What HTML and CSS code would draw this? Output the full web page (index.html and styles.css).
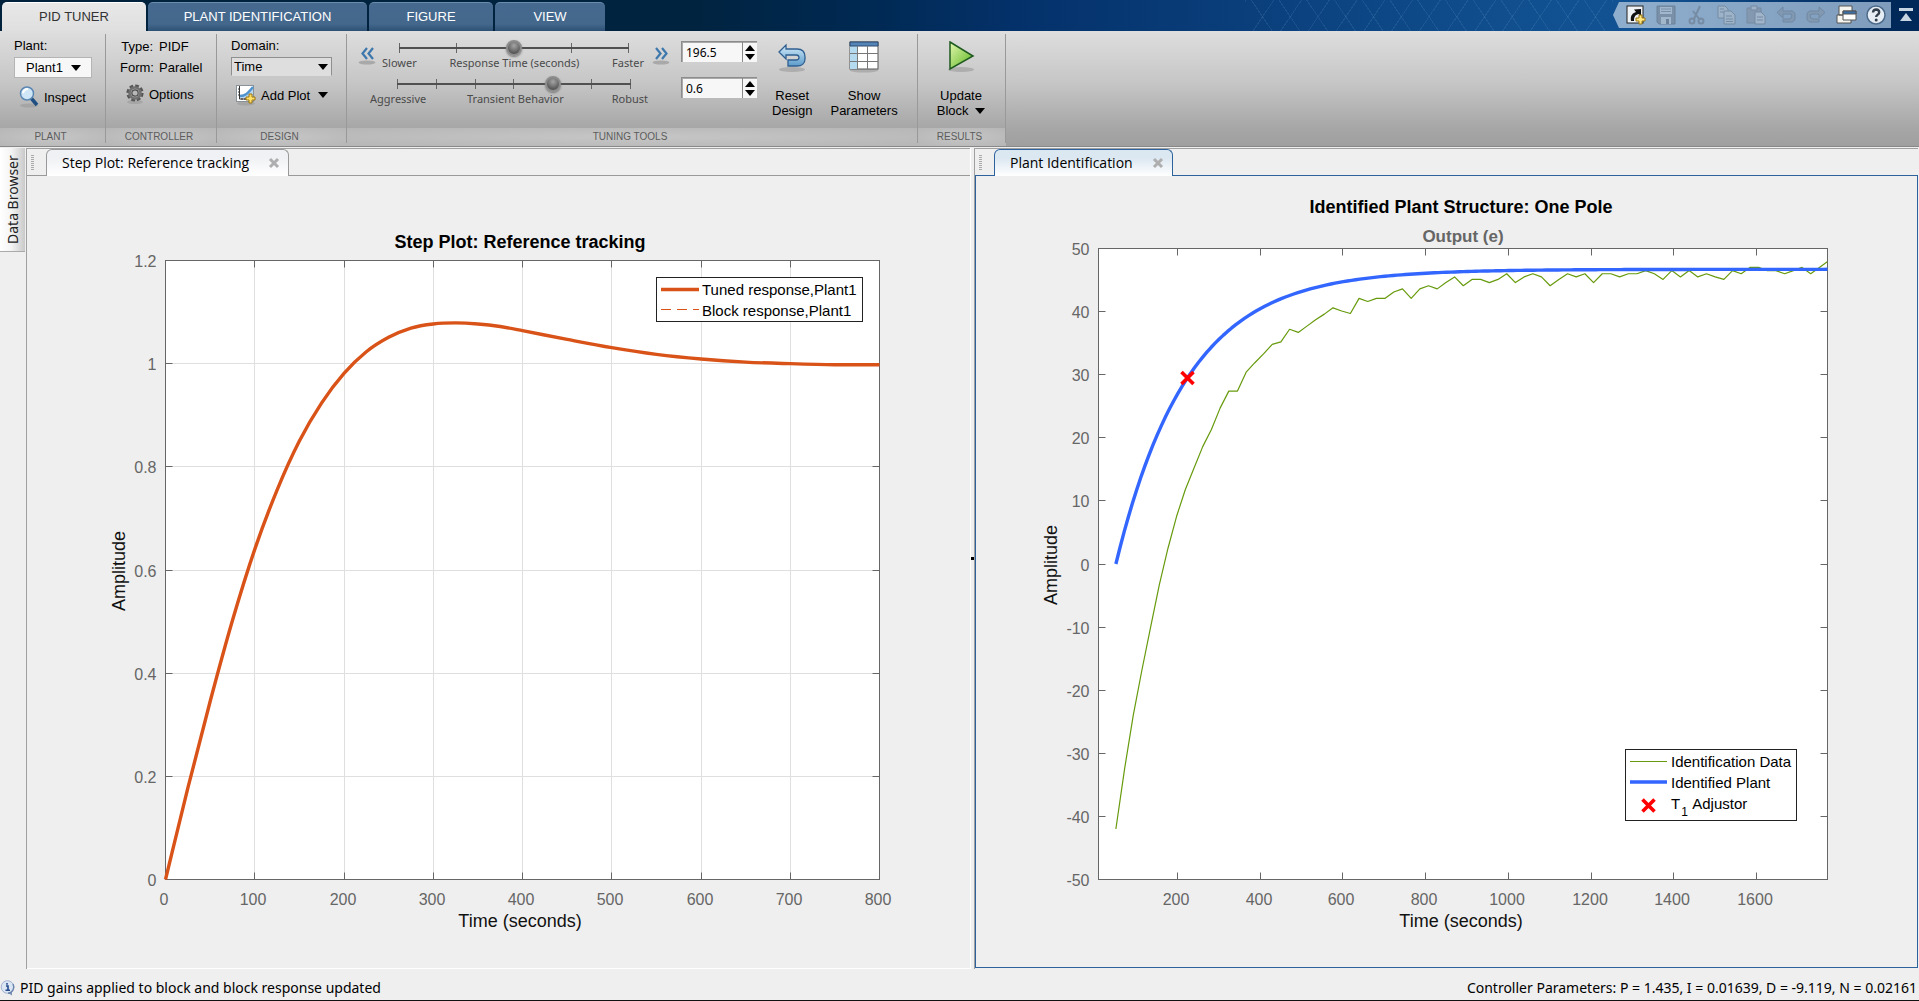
FILE: index.html
```html
<!DOCTYPE html>
<html lang="en">
<head>
<meta charset="utf-8">
<title>PID Tuner</title>
<link rel="stylesheet" href="styles.css">
</head>
<body>
<div class="app">
  <header class="titlebar">
    <nav class="tabs">
      <button class="tab tab-pid tab-active" type="button">PID TUNER</button>
      <button class="tab tab-ident" type="button">PLANT IDENTIFICATION</button>
      <button class="tab tab-figure" type="button">FIGURE</button>
      <button class="tab tab-view" type="button">VIEW</button>
    </nav>
    <div class="hatch"></div>
    <div class="quick">
      <button type="button" aria-label="New shortcut"><svg width="22" height="22" viewBox="0 0 22 22"><rect x="2" y="2" width="16" height="17" fill="#eef2f5" stroke="#222"/><path d="M6 17C5 11 8 9 11 8L9 5.500l7-.5v7l-2.500-2C10 11 9 13 9 17z" fill="#111"/><path d="M14 11h3v3h3v3h-3v3h-3v-3h-3v-3h3z" fill="#ffe680" stroke="#9a7410"/></svg></button>
      <button type="button" aria-label="Save" class="off"><svg width="22" height="22" viewBox="0 0 22 22"><path d="M2 2h18v18H4l-2-2z" fill="#74879c" stroke="#60748a"/><path d="M5 3h12v7H5zM6 13h10v7H6z" fill="#a9bbcd"/><path d="M6 5h10M6 7.500h10" stroke="#74879c"/><path d="M11 15h3v5h-3z" fill="#60748a"/></svg></button>
      <button type="button" aria-label="Cut" class="off"><svg width="22" height="22" viewBox="0 0 22 22" fill="none" stroke="#6f8398" stroke-width="2"><path d="M15 2L9 15M8 7l7 9"/><circle cx="7" cy="17" r="2.500"/><circle cx="16" cy="17" r="2.500"/></svg></button>
      <button type="button" aria-label="Copy" class="off"><svg width="22" height="22" viewBox="0 0 22 22" fill="#a5b7c9" stroke="#6f8398"><path d="M3 2h7l3 3v9H3z"/><path d="M9 7h7l4 4v9H9z"/><path d="M5 5h4M5 8h4M11 12h6M11 15h7M11 17.500h7"/></svg></button>
      <button type="button" aria-label="Paste" class="off"><svg width="22" height="22" viewBox="0 0 22 22" stroke="#6f8398"><path d="M2 4h14v15H2z" fill="#8396aa"/><path d="M6 2h6v4H6z" fill="#a5b7c9"/><path d="M10 8h6l4 4v8H10z" fill="#a9bbcd"/><path d="M12 13h6M12 16h6"/></svg></button>
      <button type="button" aria-label="Undo" class="off"><svg width="22" height="22" viewBox="0 0 22 22"><path d="M8 3v4h7a4 4 0 0 1 5 4v3a4 4 0 0 1-5 4H8v-3h6q3 0 3-4-.5-1-3-1H8v4L2 8.500z" fill="#7f95ad" stroke="#6a8098"/></svg></button>
      <button type="button" aria-label="Redo" class="off"><svg width="22" height="22" viewBox="0 0 22 22"><path d="M14 3v4H7a4 4 0 0 0-5 4v3a4 4 0 0 0 5 4h7v-3H8q-3 0-3-4 .5-1 3-1h6v4l6-5.500z" fill="#8297ad" stroke="#6a8098"/></svg></button>
      <button type="button" aria-label="Switch windows"><svg width="22" height="22" viewBox="0 0 22 22" fill="#f5f4ee" stroke="#555"><path d="M4 2h13v9H4zM2 11h14v8H2z"/><path d="M8 7h13v9H8z" fill="#fff"/><path d="M8 7h13v3H8z" fill="#3c6fa5"/></svg></button>
      <button type="button" aria-label="Help"><svg width="22" height="22" viewBox="0 0 22 22"><circle cx="11" cy="11" r="9" fill="#e6edf4" stroke="#4c6a8a" stroke-width="1.500"/><path d="M8 8.500q.3-3 3.200-3 3 .2 3 2.800 0 1.500-1.600 2.400-1.400.8-1.400 2.300" fill="none" stroke="#333f4d" stroke-width="2.400"/><circle cx="11.200" cy="16" r="1.500" fill="#333f4d"/></svg></button>
    </div>
    <button class="collapse" type="button" aria-label="Minimize toolstrip"><svg width="14" height="14" viewBox="0 0 14 14"><path d="M0 0h14v3H0zM7 5l6 8H1z" fill="#c8d6e4"/></svg></button>
  </header>

  <div class="toolstrip">
    <section class="group g-plant">
      <div class="group-body">
        <span class="caption">Plant:</span>
        <button class="drop" type="button">Plant1 <i class="caret"></i></button>
        <button class="tool inspect" type="button"><svg width="20" height="22" viewBox="0 0 20 22"><ellipse cx="10" cy="19.500" rx="9" ry="2" fill="#999" opacity=".6"/><path d="M12 12l6 7" stroke="#1f4f82" stroke-width="3.500"/><circle cx="8" cy="7.500" r="6.500" fill="#cfe6f7" stroke="#5b87b3" stroke-width="1.500"/><path d="M4 7q1-4 5-4" stroke="#fff" stroke-width="2" fill="none"/></svg>Inspect</button>
      </div>
      <h2>PLANT</h2>
    </section>
    <section class="group g-controller">
      <div class="group-body">
        <dl class="facts"><dt>Type:</dt><dd>PIDF</dd><dt>Form:</dt><dd>Parallel</dd></dl>
        <button class="tool options" type="button"><svg width="18" height="20" viewBox="0 0 18 20"><ellipse cx="9" cy="18" rx="8" ry="2" fill="#999" opacity=".6"/><circle cx="9" cy="9" r="7.300" fill="none" stroke="#555" stroke-width="2.600" stroke-dasharray="3.700 2.030"/><circle cx="9" cy="9" r="5.500" fill="#ccc" stroke="#707070" stroke-width="2.600"/><circle cx="9" cy="9" r="3.200" fill="#b8b8b8" stroke="#484848" stroke-width="1.200"/></svg>Options</button>
      </div>
      <h2>CONTROLLER</h2>
    </section>
    <section class="group g-design">
      <div class="group-body">
        <label class="caption" for="domain">Domain:</label>
        <div class="select-wrap"><select id="domain"><option>Time</option><option>Frequency</option></select><i class="caret"></i></div>
        <button class="tool addplot" type="button"><svg width="20" height="22" viewBox="0 0 20 22"><ellipse cx="10" cy="19.500" rx="9" ry="2" fill="#999" opacity=".6"/><rect x=".5" y="1.500" width="17" height="16" fill="#fff" stroke="#8a9299"/><path d="M4 12C10 12 12 9 17 3V14H4z" fill="#b9d8ef"/><path d="M3.500 2v13H17M2 5h2M2 8h2M2 11h2M6 14v2M9 14v2M12 14v2" stroke="#333" fill="none"/><path d="M4 12C10 12 12 9 17 3" stroke="#4f93cf" stroke-width="2.500" fill="none"/><path d="M13 10h3v3h3v3h-3v3h-3v-3h-3v-3h3z" fill="#ffdf66" stroke="#9a7410"/></svg>Add Plot <i class="caret"></i></button>
      </div>
      <h2>DESIGN</h2>
    </section>
    <section class="group g-tuning">
      <div class="group-body tuning">
        <button class="step" type="button" aria-label="Slower"><svg width="18" height="20" viewBox="0 0 18 20"><ellipse cx="9" cy="17.500" rx="8.500" ry="2" fill="#999" opacity=".7"/><path d="M9 3L4.500 8.500 9 14M15 3l-4.500 5.500L15 14" fill="none" stroke="#3d78ad" stroke-width="2.200"/></svg></button>
        <div class="sliders">
          <div class="slider s-time">
            <input type="range" min="0" max="100" value="50" aria-label="Response Time (seconds)">
            <div class="marks"><span>Slower</span><span>Response Time (seconds)</span><span>Faster</span></div>
          </div>
          <div class="slider s-behavior">
            <input type="range" min="0" max="100" value="68" aria-label="Transient Behavior">
            <div class="marks"><span>Aggressive</span><span>Transient Behavior</span><span>Robust</span></div>
          </div>
        </div>
        <button class="step" type="button" aria-label="Faster"><svg width="18" height="20" viewBox="0 0 18 20"><ellipse cx="9" cy="17.500" rx="8.500" ry="2" fill="#999" opacity=".7"/><path d="M4 3l4.500 5.500L4 14M10 3l4.500 5.500L10 14" fill="none" stroke="#3d78ad" stroke-width="2.200"/></svg></button>
        <div class="spinners">
          <div class="spin"><input type="text" value="196.5" aria-label="Response time"><span class="arrows"><button type="button" class="up" aria-label="Increase time"></button><button type="button" class="down" aria-label="Decrease time"></button></span></div>
          <div class="spin"><input type="text" value="0.6" aria-label="Transient behavior"><span class="arrows"><button type="button" class="up" aria-label="Increase behavior"></button><button type="button" class="down" aria-label="Decrease behavior"></button></span></div>
        </div>
        <button class="big reset" type="button"><svg width="30" height="32" viewBox="0 0 30 32"><defs><linearGradient id="gb" x1="0" y1="0" x2="0" y2="1"><stop offset="0" stop-color="#d4ecfa"/><stop offset="1" stop-color="#5b9bcb"/></linearGradient></defs><ellipse cx="15" cy="28.500" rx="13" ry="2.500" fill="#999" opacity=".6"/><path d="M9 4v4h11c5 0 8 3 8 8v2c0 4-3 7-8 7h-9v-6h8c2 0 3-1 3-2.500S21 14 19 14H9v4l-7-7z" fill="url(#gb)" stroke="#2f5f90" stroke-width="1.300"/></svg><span>Reset<br>Design</span></button>
        <button class="big params" type="button"><svg width="30" height="32" viewBox="0 0 30 32"><ellipse cx="15" cy="29.500" rx="14" ry="2" fill="#999" opacity=".6"/><rect x="1" y="1" width="28" height="27" fill="#fff" stroke="#555"/><path d="M1 5h7v23H1z" fill="#b4daf0"/><path d="M1 1h28v4H1z" fill="#5585b8" stroke="#2c4a6c"/><path d="M8.500 5v23M18.500 5v23M1 12.500h28M1 20.500h28" stroke="#777"/></svg><span>Show<br>Parameters</span></button>
      </div>
      <h2>TUNING TOOLS</h2>
    </section>
    <section class="group g-results">
      <div class="group-body results">
        <button class="big update" type="button"><svg width="30" height="32" viewBox="0 0 30 32"><defs><linearGradient id="gg" x1="0" y1="0" x2="1" y2="1"><stop offset="0" stop-color="#e4f7b0"/><stop offset="1" stop-color="#58b41c"/></linearGradient></defs><ellipse cx="15" cy="28.500" rx="13" ry="2.500" fill="#999" opacity=".6"/><path d="M4 1l23 14L4 28z" fill="url(#gg)" stroke="#1f5a20" stroke-width="1.500"/></svg><span>Update<br>Block <i class="caret"></i></span></button>
      </div>
      <h2>RESULTS</h2>
    </section>
  </div>

  <main class="workspace">
    <aside class="rail"><button type="button">Data Browser</button></aside>
    <section class="pane">
      <div class="doc-tabs">
        <i class="grip"></i>
        <div class="doc-tab"><span>Step Plot: Reference tracking</span><button type="button" aria-label="Close step plot"><svg width="12" height="12" viewBox="0 0 12 12"><path d="M2 2l8 8M10 2l-8 8" stroke="#aeaeae" stroke-width="3"/></svg></button></div>
      </div>
      <div class="canvas"><svg id="step-plot" viewBox="0 0 943 792"></svg></div>
    </section>
    <div class="splitter"></div>
    <section class="pane pane-active">
      <div class="doc-tabs">
        <i class="grip"></i>
        <div class="doc-tab"><span>Plant Identification</span><button type="button" aria-label="Close plant identification"><svg width="12" height="12" viewBox="0 0 12 12"><path d="M2 2l8 8M10 2l-8 8" stroke="#aeaeae" stroke-width="3"/></svg></button></div>
      </div>
      <div class="canvas"><svg id="ident-plot" viewBox="0 0 941 791"></svg></div>
    </section>
  </main>

  <footer class="status">
    <svg width="16" height="16" viewBox="0 0 16 16"><circle cx="7.500" cy="7" r="6.300" fill="#dbe6f4" stroke="#a3b3d0"/><path d="M8 13l4 2.500V11" fill="#7d92b8"/><path d="M13 4a6.300 6.300 0 0 1-5 9.300" fill="none" stroke="#6d84ad" stroke-width="1.500"/><path d="M6 6h2v4M5.500 10.200h4.500M7 3v1.700" fill="none" stroke="#234a8c" stroke-width="1.600"/></svg>
    <span>PID gains applied to block and block response updated</span>
    <span class="gains">Controller Parameters: P = 1.435, I = 0.01639, D = -9.119, N = 0.02161</span>
  </footer>
</div>
<script src="plots.js"></script>
</body>
</html>
```
FILE: styles.css
```css
* { box-sizing: border-box; }
body { margin: 0; font-family: "Liberation Sans", Arial, sans-serif; font-size: 13px; color: #000; background: #efefef; }
button, input, select { font: inherit; color: inherit; margin: 0; padding: 0; border: 0; background: none; }
svg { display: block; flex: none; }
h2 { margin: 0; font-weight: 400; }

.app { display: flex; flex-direction: column; min-height: 100vh; border-bottom: 1px solid #111; }

/* title bar */
.titlebar { display: flex; height: 31px; padding: 2px 6px 0 2px; background: linear-gradient(to right, #00223d 0%, #00233f 36%, #002a55 46%, #04316a 53%, #115090 80%, #125293 86%, #00295a 98%, #00295a 100%); }
.tabs { display: flex; gap: 2px; }
.tab { height: 29px; padding-bottom: 2px; border-top: 1px solid #6b8cad; border-radius: 5px 5px 0 0; color: #fff; background: linear-gradient(#466a8f 0%, #44688c 75%, #2d5174 100%); }
.tab-active { background: linear-gradient(#e8e8e8, #dfdfdf); color: #333; border-color: #fff; }
.tab-pid { width: 144px; }
.tab-ident { width: 219px; }
.tab-figure { width: 124px; }
.tab-view { width: 110px; }
.hatch { flex: 1; margin: -2px 0 0 640px; background: repeating-linear-gradient(56deg, transparent 0 22px, rgba(120, 170, 220, .14) 22px 23px), repeating-linear-gradient(-56deg, transparent 0 22px, rgba(120, 170, 220, .14) 22px 23px); }
.quick { display: flex; align-items: center; gap: 8px; height: 26px; padding: 0 4px 0 12px; background: linear-gradient(to right, #8faecd, #7f9cbc); clip-path: polygon(6px 0, 100% 0, 100% 100%, 6px 100%, 0 50%); }
.quick svg, .collapse svg { margin: auto; }
.off { opacity: .75; }
.collapse { margin: 6px 0 0 8px; height: 14px; }

/* toolstrip */
.toolstrip { display: flex; height: 116px; border-bottom: 1px solid #888; background: linear-gradient(#dedede 0%, #c6c6c6 45%, #a6a6a6 85%, #9f9f9f 100%); }
.group { display: flex; flex-direction: column; position: relative; }
.group::after { content: ""; position: absolute; right: 0; top: 3px; bottom: 3px; width: 1px; background: #999; }
.group-body { height: 97px; }
.group h2 { height: 18px; padding-right: 5px; font-size: 10px; line-height: 17px; text-align: center; color: #5c5c5c; background: radial-gradient(ellipse at center, #c6c6c6, #b6b6b6); }
.g-plant { width: 106px; }
.g-controller { width: 111px; }
.g-design { width: 130px; }
.g-tuning { width: 571px; }
.g-results { width: 88px; }
.g-plant .group-body, .g-design .group-body { display: flex; flex-direction: column; align-items: flex-start; padding: 7px 14px 0; }
.caption { line-height: 16px; margin-bottom: 3px; }
.caret { display: inline-block; border: 5px solid transparent; border-top: 6px solid #000; border-bottom: 0; }
.drop { display: flex; align-items: center; gap: 8px; height: 21px; padding: 0 10px 0 11px; background: #f7f7f7; border: 1px solid #b4b4b4; }
.tool { display: flex; align-items: center; gap: 5px; height: 24px; }
.inspect { margin: 7px 0 0 5px; }
.g-controller .group-body { padding: 5px 0 0 14px; }
.facts { display: grid; grid-template-columns: 33px 1fr; column-gap: 6px; margin: 0; line-height: 21px; }
.facts dt { text-align: right; }
.facts dd { margin: 0; }
.options { margin: 4px 0 0 6px; gap: 5px; }
.select-wrap { display: grid; align-items: center; width: 101px; height: 19px; background: #dedede; border: 1px solid #8f8f8f; border-bottom-color: #ddd; }
.select-wrap > * { grid-area: 1 / 1; }
.select-wrap select { appearance: none; width: 100%; padding-left: 2px; }
.select-wrap .caret { justify-self: end; margin-right: 3px; pointer-events: none; }
.addplot { margin: 7px 0 0 5px; }
.addplot .caret { margin-left: 3px; }

.tuning { display: flex; align-items: flex-start; padding: 10px 0 0 11px; }
.step { margin-top: 4px; }
.sliders { width: 284px; padding: 0 6px; font-family: "Noto Sans", sans-serif; font-size: 11px; color: #4a4a4a; margin-right: -8px; }
.slider { height: 36px; }
.slider input { appearance: none; display: block; height: 14px; }
.s-time input { width: 230px; margin-left: 17px; background: linear-gradient(#505050, #505050) 0 6px / 100% 2px no-repeat, repeating-linear-gradient(to right, #666 0 1px, transparent 1px calc((100% - 1px) / 4)) 0 2px / 100% 10px no-repeat; }
.s-behavior input { width: 234px; margin-left: 15px; background: linear-gradient(#505050, #505050) 0 6px / 100% 2px no-repeat, repeating-linear-gradient(to right, #666 0 1px, transparent 1px calc((100% - 1px) / 6)) 0 2px / 100% 10px no-repeat; }
.slider input::-webkit-slider-thumb { appearance: none; width: 16px; height: 16px; border-radius: 50%; border: 2px solid #8c8c8c; background: radial-gradient(circle at 50% 30%, #a5a5a5, #555 75%); box-shadow: 0 1px 2px #777; }
.marks { display: flex; justify-content: space-between; line-height: 16px; }
.s-time .marks { padding: 0 10px 0 0; }
.s-behavior .marks { display: grid; grid-template-columns: 97px 1fr auto; margin-left: -12px; padding-right: 6px; }
.spinners { display: flex; flex-direction: column; gap: 15px; margin-left: 11px; }
.spin { display: flex; width: 76px; height: 21px; border: 1px solid #8c8c8c; border-width: 1px 0 0 1px; box-shadow: inset 1px 1px #aaa; background: #f7f7f7; }
.spin input { width: 60px; padding-left: 4px; font-family: "Noto Sans", sans-serif; font-size: 12px; }
.arrows { display: flex; flex-direction: column; justify-content: center; align-items: center; gap: 3px; width: 15px; border-left: 1px solid #888; }
.up { border: 5px solid transparent; border-top: 0; border-bottom: 6px solid #000; }
.down { border: 5px solid transparent; border-bottom: 0; border-top: 6px solid #000; }
.big { display: flex; flex-direction: column; align-items: center; gap: 15px; line-height: 15px; }
.reset { margin-left: 15px; }
.params { margin-left: 18px; }
.results { display: flex; justify-content: center; align-items: flex-start; padding: 10px 2px 0 0; }
.big .caret { margin: 0 0 1px 3px; }

/* documents */
.workspace { flex: 1; display: grid; grid-template-columns: 26px 1fr 4px 1fr; margin-top: 1px; padding-right: 1px; min-height: 0; }
.rail button { width: 25px; height: 104px; writing-mode: vertical-rl; transform: rotate(180deg); font: 14px/24px "Noto Sans", sans-serif; color: #222; background: linear-gradient(to left, #fff, #f4f4f4 45%, #c9c9c9); border-top: 1px solid #aaa; }
.pane { display: flex; flex-direction: column; border-left: 1px solid #a0a0a0; border-top: 1px solid #a0a0a0; }
.doc-tabs { display: flex; align-items: stretch; height: 27px; border-bottom: 1px solid #999; }
.grip { width: 3px; height: 15px; margin: 6px 12px 0 4px; background: repeating-linear-gradient(#aaa 0 1px, transparent 1px 2px); }
.doc-tab { display: flex; align-items: center; gap: 19px; height: 27px; padding: 0 8px 1px 15px; font: 14px/24px "Open Sans", sans-serif; border: 1px solid #999; border-bottom: 0; border-radius: 6px 6px 0 0; background: linear-gradient(#f0f1f4 30%, #fff); }
.canvas { flex: 1; display: flex; min-height: 0; border-bottom: 1px solid #fff; }
.canvas svg { flex: 1; width: 100%; height: 100%; min-width: 0; }
.splitter { border-left: 1px solid #fff; background: linear-gradient(#000, #000) 0 50% / 3px 3px no-repeat; }
.pane-active .doc-tabs { border-color: #2d639c; }
.pane-active .doc-tab { border-color: #2d639c; background: linear-gradient(#dbe7f1 30%, #fff); }
.pane-active .canvas { border: 1px solid #2d639c; border-top: 0; margin-bottom: 1px; }

.status { display: flex; align-items: center; gap: 4px; height: 31px; padding: 6px 2px 0 0; font: 14px/20px "Noto Sans", sans-serif; }
.gains { margin-left: auto; }

/* plots */
.plot-box { fill: #fff; stroke: none; }
.frame { fill: none; stroke: #666; }
.grid { stroke: #dfdfdf; }
.tick { stroke: #666; }
.tick-label { font-size: 16px; fill: #666; }
.axis-label { font-size: 18px; fill: #111; }
.title { font-size: 18px; font-weight: 700; fill: #000; }
.subtitle { font-size: 17px; font-weight: 700; fill: #666; }
.legend-box { fill: #fff; stroke: #222; }
.legend-text { font-size: 15px; fill: #000; }
.legend-sub { font-size: 12px; }
.curve { fill: none; stroke-linejoin: round; }
.tuned { stroke: #d95319; stroke-width: 3.4; }
.block { stroke: #d95319; stroke-width: 1; stroke-dasharray: 10 6; }
.data { stroke: #679a0c; stroke-width: 1.2; }
.model { stroke: #3366ff; stroke-width: 3.4; }
.adjustor { stroke: #f00; stroke-width: 3.6; fill: none; }
```
FILE: plots.js
```js
const NS = "http://www.w3.org/2000/svg";

function add(parent, name, attrs, text) {
  const el = document.createElementNS(NS, name);
  for (const k in attrs) el.setAttribute(k, attrs[k]);
  if (text !== undefined) el.textContent = text;
  parent.appendChild(el);
  return el;
}

function axes(svg, o) {
  const [x0, y0, x1, y1] = o.box;
  const sx = t => x0 + (t - o.xlim[0]) / (o.xlim[1] - o.xlim[0]) * (x1 - x0);
  const sy = v => y1 - (v - o.ylim[0]) / (o.ylim[1] - o.ylim[0]) * (y1 - y0);
  const crisp = p => Math.floor(p) + 0.5;
  const line = (cls, a, b, c, d) => add(svg, "line", { class: cls, x1: a, y1: b, x2: c, y2: d });
  const mid = Math.floor((x0 + x1) / 2);

  add(svg, "rect", { class: "plot-box", x: x0, y: y0, width: x1 - x0, height: y1 - y0 });
  if (o.grid) {
    o.xticks.forEach(t => line("grid", crisp(sx(t)), y0, crisp(sx(t)), y1));
    o.yticks.forEach(v => line("grid", x0, crisp(sy(v)), x1, crisp(sy(v))));
  }
  o.xticks.forEach(t => {
    const x = crisp(sx(t));
    line("tick", x, y0, x, y0 + 7);
    line("tick", x, y1 - 7, x, y1);
    add(svg, "text", { class: "tick-label", x: Math.floor(x) - 1, y: y1 + 25, "text-anchor": "middle" }, t);
  });
  o.yticks.forEach(v => {
    const y = crisp(sy(v));
    line("tick", x0, y, x0 + 7, y);
    line("tick", x1 - 7, y, x1, y);
    add(svg, "text", { class: "tick-label", x: x0 - 9, y: y + 6, "text-anchor": "end" }, v);
  });
  add(svg, "rect", { class: "frame", x: x0, y: y0, width: x1 - x0, height: y1 - y0 });
  add(svg, "text", { class: "axis-label", x: mid - 2, y: y1 + 47, "text-anchor": "middle" }, "Time (seconds)");
  add(svg, "text", { class: "axis-label", "text-anchor": "middle", transform: `translate(${o.ylabelX} ${(y0 + y1) / 2 + 1}) rotate(-90)` }, "Amplitude");
  add(svg, "text", { class: "title", x: mid - 2, y: o.titleY, "text-anchor": "middle" }, o.title);
  return { sx, sy, line, mid };
}

/* cubic path through the samples, with central-difference tangents */
function smooth(points) {
  let d = `M${points[0]}`;
  const slope = i => {
    const a = points[Math.max(i - 1, 0)], b = points[Math.min(i + 1, points.length - 1)];
    return (b[1] - a[1]) / (b[0] - a[0]);
  };
  for (let i = 1; i < points.length; i++) {
    const [ax, ay] = points[i - 1], [bx, by] = points[i], h = (bx - ax) / 3;
    d += `C${ax + h},${ay + h * slope(i - 1)} ${bx - h},${by - h * slope(i)} ${bx},${by}`;
  }
  return d;
}

function cross(svg, x, y) {
  add(svg, "path", { class: "adjustor", d: `M${x - 6} ${y - 6}l12 12M${x + 6} ${y - 6}l-12 12` });
}

/* step response */
{
  const svg = document.getElementById("step-plot");
  const a = axes(svg, {
    box: [138.5, 84.5, 852.5, 703.5], xlim: [0, 800], ylim: [0, 1.2], grid: true,
    xticks: [0, 100, 200, 300, 400, 500, 600, 700, 800], yticks: [0, 0.2, 0.4, 0.6, 0.8, 1, 1.2],
    ylabelX: 98, titleY: 72, title: "Step Plot: Reference tracking"
  });
  const response = [[0, 0], [25, .177], [50, .345], [75, .502], [100, .64], [125, .755], [150, .85], [175, .924],
    [200, .981], [225, 1.023], [250, 1.051], [275, 1.069], [300, 1.077], [325, 1.079], [350, 1.077], [375, 1.072],
    [400, 1.064], [450, 1.047], [500, 1.031], [550, 1.018], [600, 1.009], [650, 1.003], [700, 1], [750, .998], [800, .998]];
  add(svg, "path", { class: "curve tuned", d: smooth(response.map(([t, v]) => [a.sx(t), a.sy(v)])) });
  add(svg, "rect", { class: "legend-box", x: 629.5, y: 101.5, width: 206, height: 44 });
  a.line("tuned", 634, 113.5, 672, 113.5);
  a.line("block", 634, 133.5, 672, 133.5);
  add(svg, "text", { class: "legend-text", x: 675, y: 119 }, "Tuned response,Plant1");
  add(svg, "text", { class: "legend-text", x: 675, y: 140 }, "Block response,Plant1");
}

/* plant identification */
{
  const svg = document.getElementById("ident-plot");
  const a = axes(svg, {
    box: [122.5, 72.5, 851.5, 703.5], xlim: [9, 1771.6], ylim: [-50, 50],
    xticks: [200, 400, 600, 800, 1000, 1200, 1400, 1600], yticks: [-50, -40, -30, -20, -10, 0, 10, 20, 30, 40, 50],
    ylabelX: 81, titleY: 37, title: "Identified Plant Structure: One Pole"
  });
  add(svg, "text", { class: "subtitle", x: a.mid, y: 66, "text-anchor": "middle" }, "Output (e)");
  const start = 51, step = 21;
  const measured = [-42, -32.5, -24, -16.8, -10, -3.3, 2.5, 7.6, 11.8, 15.2, 18.6, 21.3, 24.7, 27.4, 27.4, 30.4,
    31.9, 33.3, 34.8, 35.2, 37.2, 36.7, 37.7, 38.7, 39.6, 40.6, 40.1, 39.7, 42.1, 41.6, 42.1, 42.1, 43.1, 43.6, 42.1,
    43.6, 44.1, 43.6, 44.6, 45.5, 44.1, 45.1, 45.1, 44.6, 45.1, 46, 44.6, 45.5, 46, 45.5, 44.1, 45.1, 46, 45.5, 46,
    44.6, 46, 46, 45.5, 46, 46, 46.5, 46, 45.1, 46.5, 45.5, 46.5, 45.5, 46, 45.5, 45.1, 46.5, 46, 47, 47, 46.5, 46.5,
    46, 46.5, 47, 46, 47, 47.9];
  add(svg, "polyline", { class: "curve data", points: measured.map((v, i) => [a.sx(Math.min(start + step * i, 1771)), a.sy(v)]).join(" ") });
  const model = [];
  for (let t = start; t < 1771; t += 10) model.push([a.sx(t), a.sy(46.7 * (1 - Math.exp((start - t) / 173.4)))]);
  model.push([851.5, a.sy(46.7)]);
  add(svg, "polyline", { class: "curve model", points: model.join(" ") });
  cross(svg, 211.5, 202);
  add(svg, "rect", { class: "legend-box", x: 649.5, y: 573.5, width: 171, height: 71 });
  a.line("data", 654, 585.5, 691, 585.5);
  a.line("model", 654, 606, 691, 606);
  cross(svg, 672.5, 629.5);
  add(svg, "text", { class: "legend-text", x: 695, y: 591 }, "Identification Data");
  add(svg, "text", { class: "legend-text", x: 695, y: 612 }, "Identified Plant");
  const t1 = add(svg, "text", { class: "legend-text", x: 695, y: 633 }, "T");
  add(t1, "tspan", { class: "legend-sub", dx: 1, dy: 7 }, "1");
  add(t1, "tspan", { dx: 1, dy: -7 }, " Adjustor");
}
```
